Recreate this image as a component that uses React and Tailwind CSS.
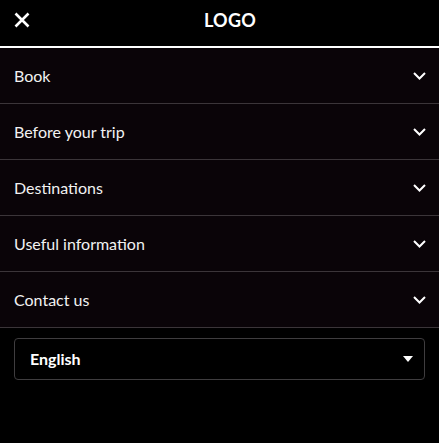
import React from 'react'

const items = ['Book', 'Before your trip', 'Destinations', 'Useful information', 'Contact us']

const Chevron = () => (
  <svg width="13" height="8" viewBox="0 0 13 8" fill="none" className="shrink-0">
    <path d="M1 1l5.5 5.5L12 1" stroke="#fff" strokeWidth="2" />
  </svg>
)

export default function App() {
  return (
    <div className="w-[439px] h-[443px] bg-black text-white font-['Lato',sans-serif]">
      <header className="relative h-[48px] flex justify-center pt-[9px] border-b-2 border-white">
        <button className="absolute left-[14px] top-[12px] w-[16px] h-[16px]">
          <svg width="16" height="16" viewBox="0 0 16 16">
            <path d="M1.5 1.5l13 13M14.5 1.5l-13 13" stroke="#fff" strokeWidth="2.6" />
          </svg>
        </button>
        <span className="ml-[21px] text-[18px] font-bold leading-[22px] tracking-[0.3px]">LOGO</span>
      </header>

      <nav className="bg-[#0a0408]">
        {items.map((label) => (
          <div
            key={label}
            className="h-[56px] flex items-center justify-between pl-[14px] pr-[13px] border-b border-[#3b3539]"
          >
            <span className="text-[16px] text-[#f2f2f2]">{label}</span>
            <Chevron />
          </div>
        ))}
      </nav>

      <div className="px-[14px] pt-[10px]">
        <div className="h-[42px] flex items-center justify-between pl-[15px] pr-[11px] border border-[#3f3d3f] rounded-[4px]">
          <span className="text-[16px] font-bold">English</span>
          <svg width="10" height="6" viewBox="0 0 10 6">
            <path d="M0 0h10L5 6z" fill="#fff" />
          </svg>
        </div>
      </div>
    </div>
  )
}
